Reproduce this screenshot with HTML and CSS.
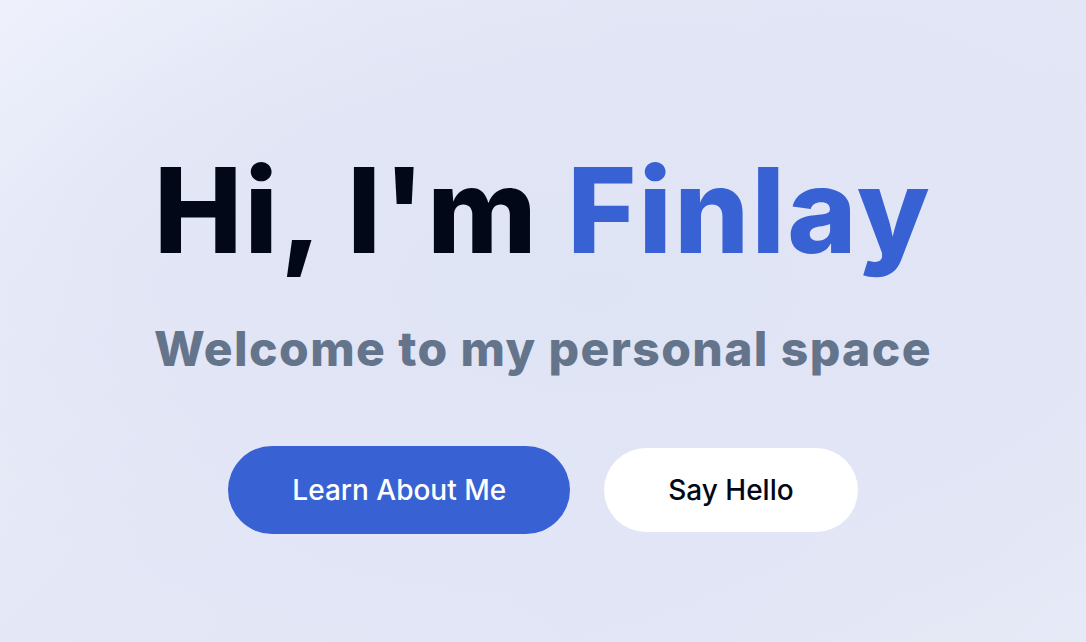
FILE: index.html
```html
<!DOCTYPE html>
<html lang="en">
<head>
<meta charset="utf-8">
<title>Finlay</title>
<link rel="stylesheet" href="styles.css">
</head>
<body>
<main class="hero">
  <h1 class="hero-title">Hi, I'm <span class="accent">Finlay</span></h1>
  <p class="hero-subtitle">Welcome to my personal space</p>
  <div class="hero-actions">
    <a class="btn btn-primary" href="#about">Learn About Me</a>
    <a class="btn btn-light" href="#contact">Say Hello</a>
  </div>
</main>
</body>
</html>
```

FILE: styles.css
```css
html, body {
  margin: 0;
  padding: 0;
  height: 100%;
}
body {
  font-family: "Inter", "Liberation Sans", sans-serif;
  background:
    radial-gradient(ellipse 70% 60% at 55% 45%, #dfe4f5 0%, #e1e5f5 50%, rgba(225,229,245,0) 100%),
    linear-gradient(135deg, #eef1fc 0%, #e3e7f6 40%, #e2e6f5 70%, #e6e9f6 100%);
  overflow: hidden;
}
.hero {
  height: 100%;
  display: flex;
  flex-direction: column;
  align-items: center;
  padding-top: 140px;
  box-sizing: border-box;
}
.hero-title {
  margin: 0;
  font-size: 118px;
  line-height: 1.2;
  font-weight: 800;
  letter-spacing: 2.3px;
  color: #020817;
}
.accent {
  color: #3862d3;
}
.hero-subtitle {
  margin: 38px 0 0;
  font-size: 48px;
  line-height: 1.2;
  font-weight: 800;
  color: #64748b;
  letter-spacing: 1.4px;
}
.hero-actions {
  display: flex;
  align-items: center;
  gap: 34px;
  margin-top: 69px;
}
.btn {
  display: flex;
  align-items: center;
  justify-content: center;
  padding: 0 64px;
  font-size: 28px;
  font-weight: 500;
  text-decoration: none;
  box-sizing: border-box;
}
.btn-primary {
  height: 88px;
  border-radius: 44px;
  background: #3862d3;
  color: #ffffff;
}
.btn-light {
  height: 84px;
  border-radius: 42px;
  background: #ffffff;
  color: #020817;
}
```
